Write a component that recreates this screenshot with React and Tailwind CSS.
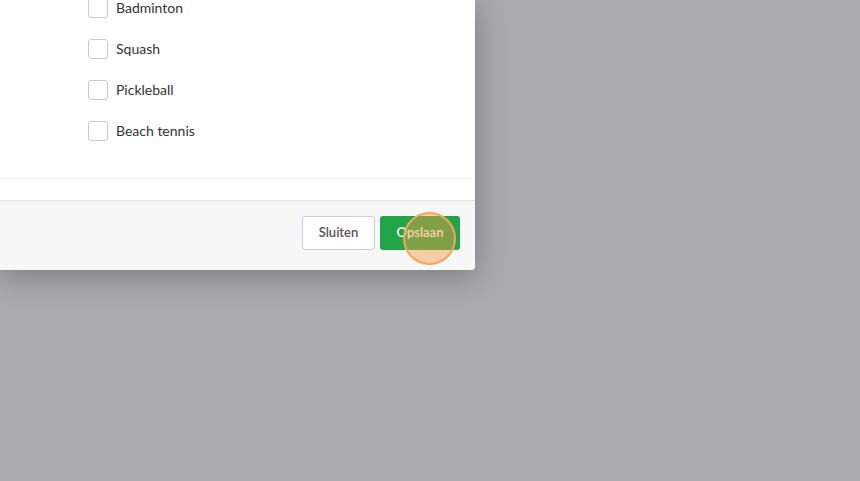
import React from 'react';

const sports = ['Badminton', 'Squash', 'Pickleball', 'Beach tennis'];

const App = () => {
  return (
    <div className="relative h-[481px] w-[860px] overflow-hidden bg-[#a9aaad]" style={{ fontFamily: 'Lato, "Noto Sans", sans-serif' }}>
      <div className="-mt-[2px] w-[475px] rounded-br-[4px] bg-white shadow-[0_6px_30px_rgba(0,0,0,0.28)]">
        <div className="mr-[3px] border-b border-[#eeeeee] pb-[37px] pl-[88px]">
          <div className="flex flex-col gap-[21px]">
            {sports.map((s) => (
              <label key={s} className="flex h-[20px] items-center gap-[8px]">
                <span className="h-[20px] w-[20px] rounded-[3px] border border-[#c9c9c9] bg-white" />
                <span className="text-[14px] leading-[20px] text-[#333]">{s}</span>
              </label>
            ))}
          </div>
        </div>
        <div className="h-[21px]" />
        <div className="flex justify-end gap-[5px] rounded-br-[4px] border-t border-[#e3e3e3] bg-[#f7f7f7] pb-[20px] pl-4 pr-[15px] pt-[15px]">
          <button className="h-[34px] w-[73px] rounded-[3px] border border-[#c6d0da] bg-white text-[13px] font-semibold text-[#555]">
            Sluiten
          </button>
          <button className="h-[34px] w-[80px] rounded-[3px] bg-[#22a546] text-[13px] font-semibold text-white">
            Opslaan
          </button>
        </div>
      </div>
      <div className="absolute left-[403px] top-[212px] h-[53px] w-[53px] rounded-full border-2 border-[#f4a65e] bg-[#f79a45]/45" />
    </div>
  );
};

export default App;
